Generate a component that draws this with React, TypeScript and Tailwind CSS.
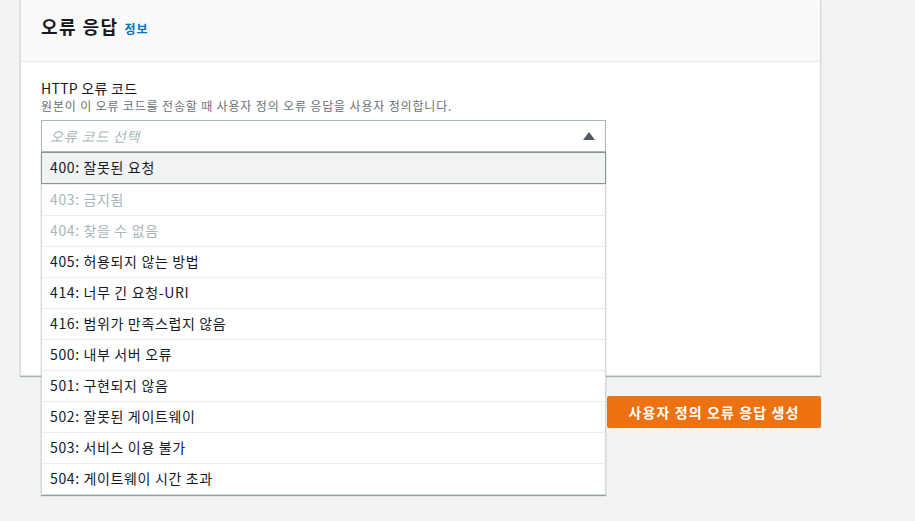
import React from "react";

const codes: { label: string; disabled?: boolean }[] = [
  { label: "400: 잘못된 요청" },
  { label: "403: 금지됨", disabled: true },
  { label: "404: 찾을 수 없음", disabled: true },
  { label: "405: 허용되지 않는 방법" },
  { label: "414: 너무 긴 요청-URI" },
  { label: "416: 범위가 만족스럽지 않음" },
  { label: "500: 내부 서버 오류" },
  { label: "501: 구현되지 않음" },
  { label: "502: 잘못된 게이트웨이" },
  { label: "503: 서비스 이용 불가" },
  { label: "504: 게이트웨이 시간 초과" },
];

export default function App() {
  return (
    <div
      className="min-h-[521px] w-full bg-[#f2f3f3] text-[#16191f] pl-5 tracking-[0.04em]"
      style={{ fontFamily: '"Noto Sans CJK KR", "Noto Sans", "Liberation Sans", sans-serif' }}
    >
      <div className="w-[801px]">
        <div className="bg-white border-x border-b border-[#d5dbdb] shadow-[0_1px_1px_0_rgba(0,28,36,0.3)]">
          <div className="h-[62px] bg-[#fafafa] border-b border-[#eaeded] px-5 pt-[13px] flex items-baseline gap-1.5">
            <h2 className="text-[18px] leading-[26px] font-bold tracking-[0.08em]">오류 응답</h2>
            <span className="text-[12px] font-bold text-[#0073bb] tracking-[0.08em]">정보</span>
          </div>
          <div className="h-[313px] px-5 pt-4">
            <div className="text-[14px] leading-[20px] tracking-[0.02em]">HTTP 오류 코드</div>
            <div className="text-[12px] leading-[16px] text-[#687078] tracking-[0.07em]">
              원본이 이 오류 코드를 전송할 때 사용자 정의 오류 응답을 사용자 정의합니다.
            </div>
            <div className="relative mt-1.5 w-[565px]">
              <div className="h-8 border border-[#aab7b8] bg-white flex items-center justify-between pl-[8px] pr-[10px]">
                <span className="text-[14px] italic text-[#aab7b8] tracking-[0.06em]">오류 코드 선택</span>
                <svg width="12" height="8" viewBox="0 0 12 8" aria-hidden="true">
                  <polygon points="6,0 12,8 0,8" fill="#545b64" />
                </svg>
              </div>
              <ul className="absolute left-0 top-8 w-full bg-white border-x border-b border-[#d5dbdb] shadow-[0_1px_1px_0_rgba(0,28,36,0.4)] z-10">
                {codes.map((c, i) => (
                  <li
                    key={c.label}
                    className={
                      i === 0
                        ? "h-8 flex items-center pl-2 pb-px text-[14px] bg-[#f2f3f3] border border-[#879596] -mx-px"
                        : "h-[31px] flex items-center pl-2 pb-px text-[14px] border-t border-[#eaeded] " +
                          (c.disabled ? "text-[#aab7b8]" : "text-[#16191f]")
                    }
                  >
                    {c.label}
                  </li>
                ))}
              </ul>
            </div>
          </div>
        </div>
        <div className="flex justify-end mt-5">
          <button className="h-8 w-[214px] bg-[#ec7211] rounded-[2px] text-white text-[14px] font-bold tracking-[0.08em]">
            사용자 정의 오류 응답 생성
          </button>
        </div>
      </div>
    </div>
  );
}
